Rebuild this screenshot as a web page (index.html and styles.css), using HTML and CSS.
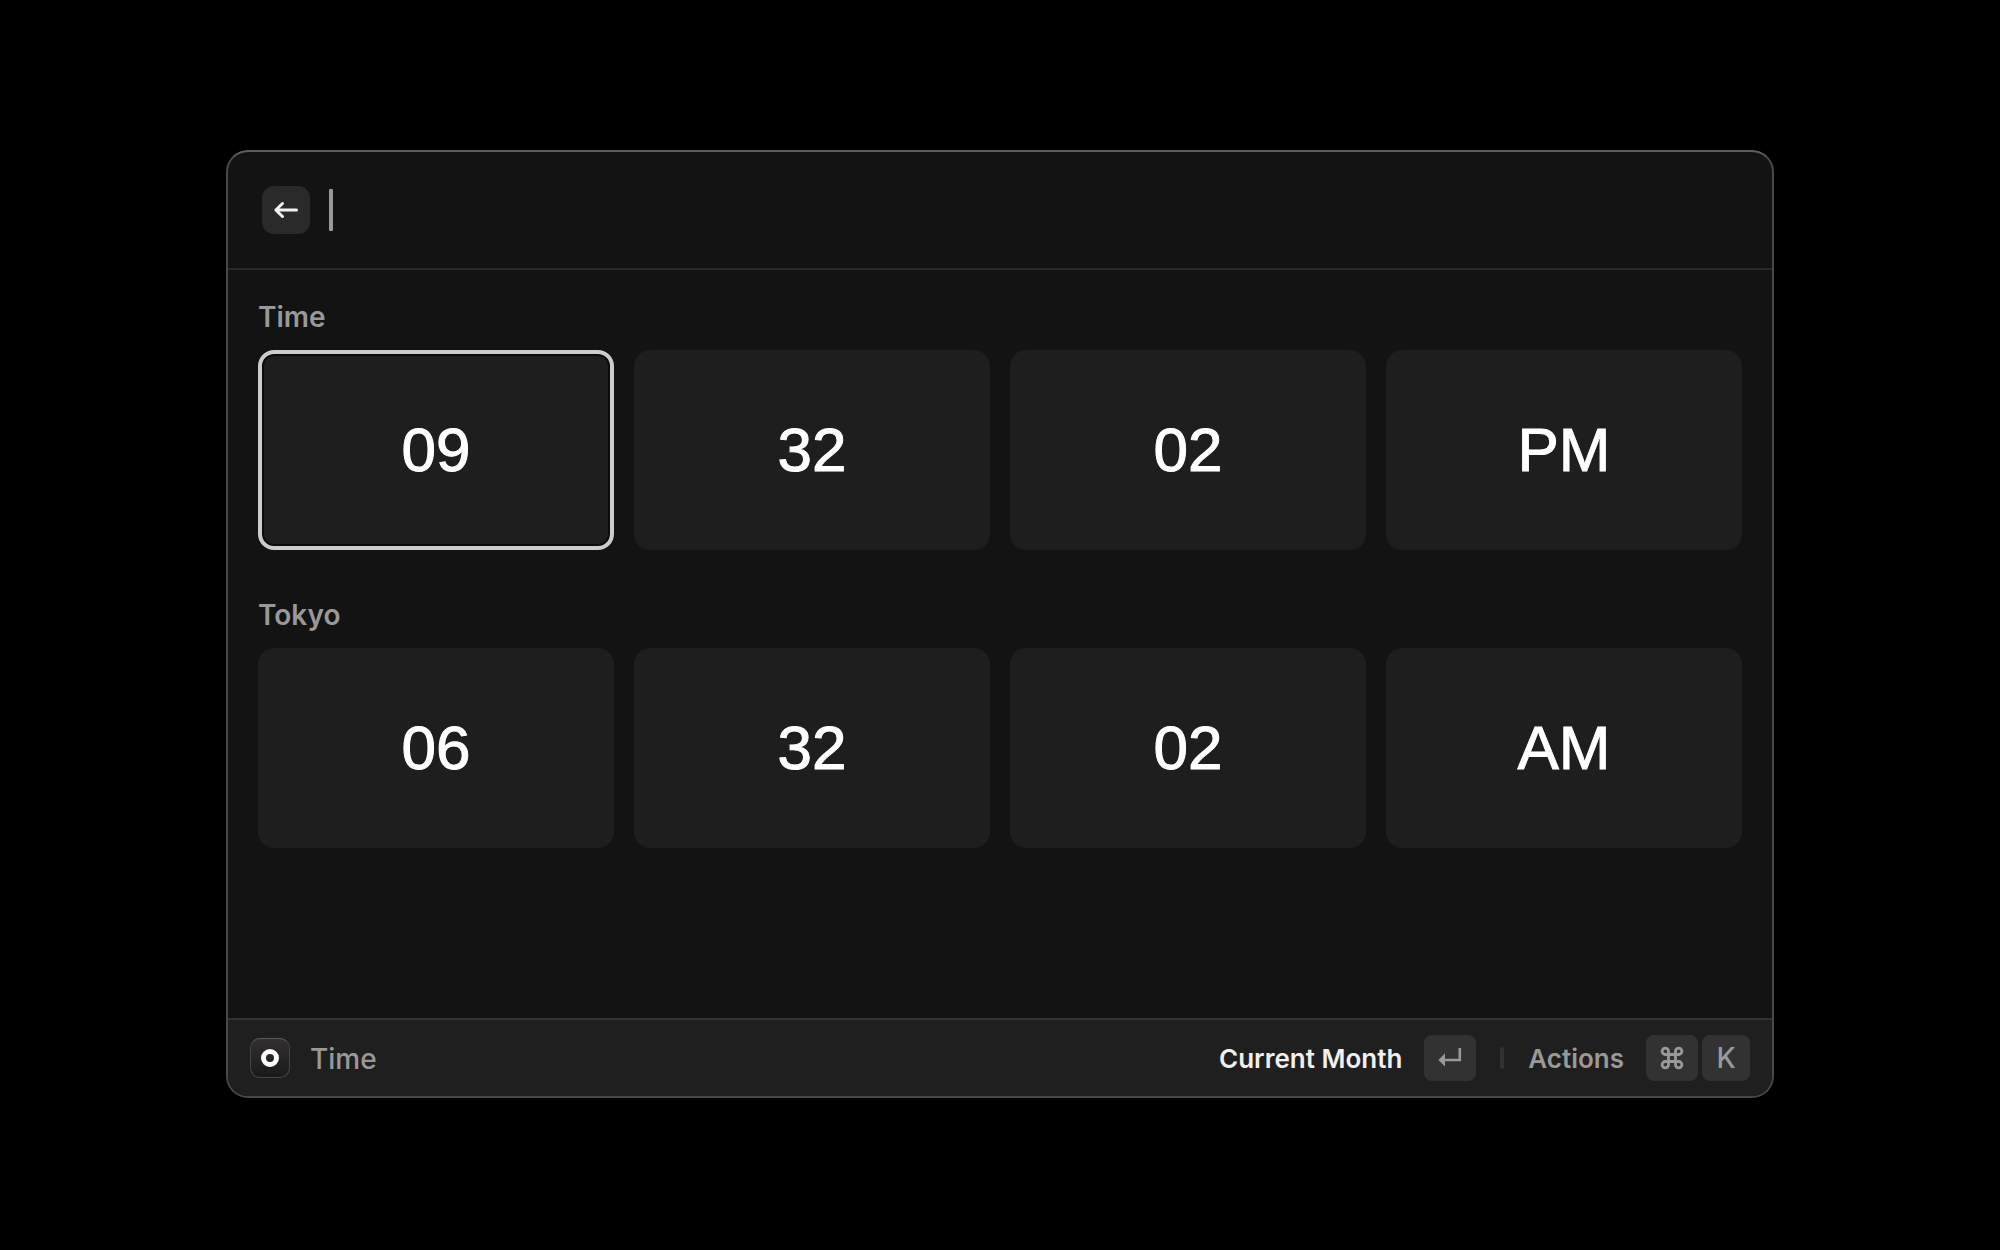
FILE: index.html
```html
<!DOCTYPE html>
<html lang="en">
<head>
<meta charset="utf-8">
<title>Time</title>
<link rel="stylesheet" href="styles.css">
</head>
<body>
<div class="window">
  <header class="search">
    <button class="back" type="button" aria-label="Back">
      <svg width="28" height="28" viewBox="0 0 28 28" fill="none" stroke="currentColor" stroke-width="3" stroke-linecap="round" stroke-linejoin="round"><path d="M10.5 7.5 L3.8 14 L10.5 20.5 M4 14 H24.5"/></svg>
    </button>
    <span class="caret"></span>
    <input class="query" type="text" aria-label="Search">
  </header>
  <main class="content">
    <section class="group">
      <h2 class="heading">Time</h2>
      <div class="tiles">
        <button class="tile selected" type="button">09</button>
        <button class="tile" type="button">32</button>
        <button class="tile" type="button">02</button>
        <button class="tile" type="button">PM</button>
      </div>
    </section>
    <section class="group">
      <h2 class="heading">Tokyo</h2>
      <div class="tiles">
        <button class="tile" type="button">06</button>
        <button class="tile" type="button">32</button>
        <button class="tile" type="button">02</button>
        <button class="tile" type="button">AM</button>
      </div>
    </section>
  </main>
  <footer class="bar">
    <span class="app-icon"><span class="ring"></span></span>
    <span class="app-name">Time</span>
    <button class="action primary" type="button">Current Month
      <kbd class="key wide"><svg width="24" height="24" viewBox="0 0 24 24"><path d="M21.8 2 V14 H6" fill="none" stroke="currentColor" stroke-width="2.6"/><path d="M0.4 14 L7 7.2 V20.4 Z" fill="currentColor"/></svg></kbd>
    </button>
    <span class="divider"></span>
    <button class="action" type="button">Actions
      <span class="keys">
        <kbd class="key wide"><svg width="24" height="24" viewBox="0 0 24 24" fill="none" stroke="currentColor" stroke-width="2.8"><path d="M8.5 8.5 H5.3 A3.2 3.2 0 1 1 8.5 5.3 V18.7 A3.2 3.2 0 1 1 5.3 15.5 H18.7 A3.2 3.2 0 1 1 15.5 18.7 V5.3 A3.2 3.2 0 1 1 18.7 8.5 Z"/></svg></kbd>
        <kbd class="key">K</kbd>
      </span>
    </button>
  </footer>
</div>
</body>
</html>
```
FILE: styles.css
```css
* {
  box-sizing: border-box;
}

body {
  margin: 0;
  padding: 150px 226px 152px;
  background: #000;
  color: #999;
  font-family: Inter, "Liberation Sans", sans-serif;
}

button,
input {
  margin: 0;
  padding: 0;
  border: 0;
  background: none;
  color: inherit;
  font: inherit;
}

.window {
  display: flex;
  flex-direction: column;
  min-height: calc(100vh - 302px);
  overflow: hidden;
  border: 2px solid #484848;
  border-top-color: #5e5e5e;
  border-radius: 22px;
  background: #131313;
}

.search {
  display: flex;
  align-items: center;
  height: 118px;
  padding: 0 34px;
  border-bottom: 2px solid #2a2a2a;
}

.back {
  display: grid;
  place-items: center;
  width: 48px;
  height: 48px;
  border-radius: 12px;
  background: #2a2a2a;
  color: #f2f2f2;
}

.caret {
  width: 4px;
  height: 42px;
  margin-left: 19px;
  border-radius: 1px;
  background: #999;
}

.query {
  flex: 1;
  height: 48px;
  outline: none;
  font-size: 28px;
}

.content {
  display: flex;
  flex: 1;
  flex-direction: column;
  gap: 48px;
  padding: 30px;
}

.heading {
  margin: 0 0 16px;
  font-size: 28px;
  font-weight: 600;
  line-height: 34px;
}

.tiles {
  display: grid;
  grid-template-columns: repeat(4, 1fr);
  gap: 20px;
}

.tile {
  height: 200px;
  padding-bottom: 2px;
  border-radius: 16px;
  background: #1e1e1e;
  color: #fff;
  font-family: "Liberation Sans", Arial, sans-serif;
  font-size: 62px;
  -webkit-text-stroke: 1px #fff;
}

.selected {
  border: 4px solid #ccc;
  box-shadow: inset 0 0 0 2px #0b0b0b;
}

.bar {
  display: flex;
  align-items: center;
  height: 78px;
  padding: 0 22px;
  border-top: 2px solid #323232;
  background: #1f1f1f;
}

.app-icon {
  display: grid;
  place-items: center;
  width: 40px;
  height: 40px;
  border: 1px solid #454545;
  border-top-color: #5a5a5a;
  border-radius: 10px;
  background: linear-gradient(#332f31, #1a1a1a);
}

.ring {
  width: 18px;
  height: 18px;
  border: 5px solid #fff;
  border-radius: 50%;
}

.app-name {
  margin: 0 auto 0 20px;
  padding-top: 2px;
  font-size: 28px;
  font-weight: 500;
}

.action {
  display: flex;
  align-items: center;
  gap: 22px;
  font-size: 26px;
  font-weight: 600;
}

.primary {
  color: #f0f0f0;
}

.keys {
  display: flex;
  gap: 4px;
}

.key {
  display: grid;
  place-items: center;
  width: 48px;
  height: 46px;
  border-radius: 8px;
  background: #323232;
  color: #999;
  font-family: inherit;
  font-size: 28px;
  font-weight: 500;
}

.wide {
  width: 52px;
}

.divider {
  width: 4px;
  height: 22px;
  margin: 0 24px;
  border-radius: 2px;
  background: #323232;
}
```
